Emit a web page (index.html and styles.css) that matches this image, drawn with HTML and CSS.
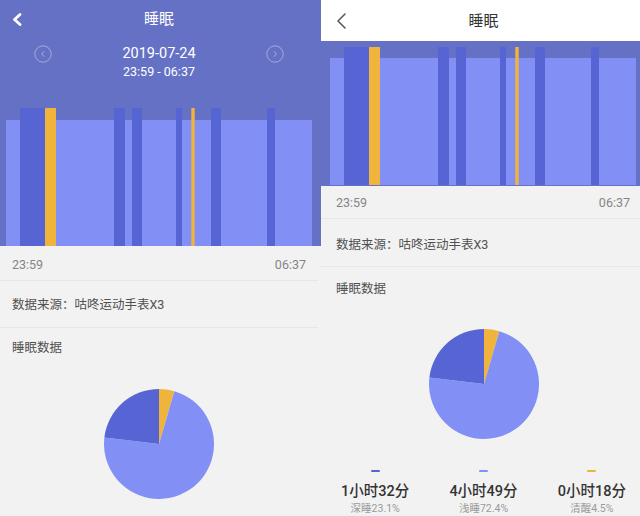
FILE: index.html
```html
<!DOCTYPE html>
<html lang="zh">
<head>
<meta charset="utf-8">
<title>睡眠</title>
<link rel="stylesheet" href="styles.css">
</head>
<body>
<div class="screens">
  <section class="panel panel-left">
    <div class="left-top">
      <div class="nav nav-dark">
        <svg class="back back-bold" width="10" height="13" viewBox="0 0 10 13"><path d="M8 1.5 L2.5 6.5 L8 11.5" fill="none" stroke="#fff" stroke-width="2.8" stroke-linecap="round" stroke-linejoin="round"/></svg>
        <span class="nav-title">睡眠</span>
      </div>
      <div class="date-row">
        <svg class="circle-btn" width="18" height="18" viewBox="0 0 18 18"><circle cx="9" cy="9" r="8.2" fill="none" stroke="#fff" stroke-opacity="0.4" stroke-width="1"/><path d="M10.2 6.3 L7.6 9 L10.2 11.7" fill="none" stroke="#fff" stroke-opacity="0.45" stroke-width="1"/></svg>
        <div class="date-block">
          <div class="date">2019-07-24</div>
          <div class="range">23:59 - 06:37</div>
        </div>
        <svg class="circle-btn" width="18" height="18" viewBox="0 0 18 18"><circle cx="9" cy="9" r="8.2" fill="none" stroke="#fff" stroke-opacity="0.4" stroke-width="1"/><path d="M7.8 6.3 L10.4 9 L7.8 11.7" fill="none" stroke="#fff" stroke-opacity="0.45" stroke-width="1"/></svg>
      </div>
      <svg class="chart chart-left" width="306" height="138" viewBox="0 0 306 138">
        <rect class="light" x="0" y="12" width="306" height="126"/>
        <rect class="deep" x="14" y="0" width="25" height="138"/>
        <rect class="awake" x="39" y="0" width="11" height="138"/>
        <rect class="deep" x="108" y="0" width="11" height="138"/>
        <rect class="deep" x="126" y="0" width="10" height="138"/>
        <rect class="deep" x="170" y="0" width="6" height="138"/>
        <rect class="awake" x="185.3" y="0" width="3.4" height="138"/>
        <rect class="deep" x="205" y="0" width="10" height="138"/>
        <rect class="deep" x="261" y="0" width="8" height="138"/>
      </svg>
    </div>
    <div class="left-bottom">
      <div class="time-row time-row-left"><span>23:59</span><span>06:37</span></div>
      <div class="source-row source-left">数据来源：咕咚运动手表X3</div>
      <div class="section-title title-left">睡眠数据</div>
      <div class="pie-wrap pie-left">
        <svg width="110" height="110" viewBox="-55 -55 110 110">
          <path class="awake" d="M0 0 L0 -55 A55 55 0 0 1 15.35 -52.82 Z"/>
          <path class="light" d="M0 0 L15.35 -52.82 A55 55 0 1 1 -54.61 -6.55 Z"/>
          <path class="deep" d="M0 0 L-54.61 -6.55 A55 55 0 0 1 0 -55 Z"/>
        </svg>
      </div>
    </div>
  </section>

  <section class="panel panel-right">
    <div class="nav nav-light">
      <svg class="back back-thin" width="11" height="16" viewBox="0 0 11 16"><path d="M9 1 L2 8 L9 15" fill="none" stroke="#555" stroke-width="1.5" stroke-linecap="round" stroke-linejoin="round"/></svg>
      <span class="nav-title">睡眠</span>
    </div>
    <div class="chart-area">
      <svg class="chart chart-right" width="306" height="138" viewBox="0 0 306 138">
        <rect class="light" x="0" y="11" width="306" height="127"/>
        <rect class="deep" x="14" y="0" width="25" height="138"/>
        <rect class="awake" x="39" y="0" width="11" height="138"/>
        <rect class="deep" x="108" y="0" width="11" height="138"/>
        <rect class="deep" x="126" y="0" width="10" height="138"/>
        <rect class="deep" x="170" y="0" width="6" height="138"/>
        <rect class="awake" x="185.3" y="0" width="3.4" height="138"/>
        <rect class="deep" x="205" y="0" width="10" height="138"/>
        <rect class="deep" x="261" y="0" width="8" height="138"/>
      </svg>
    </div>
    <div class="time-row time-row-right"><span>23:59</span><span>06:37</span></div>
    <div class="source-row source-right">数据来源：咕咚运动手表X3</div>
    <div class="section-title title-right">睡眠数据</div>
    <div class="pie-wrap pie-right">
      <svg width="110" height="110" viewBox="-55 -55 110 110">
        <path class="awake" d="M0 0 L0 -55 A55 55 0 0 1 15.35 -52.82 Z"/>
        <path class="light" d="M0 0 L15.35 -52.82 A55 55 0 1 1 -54.61 -6.55 Z"/>
        <path class="deep" d="M0 0 L-54.61 -6.55 A55 55 0 0 1 0 -55 Z"/>
      </svg>
    </div>
    <div class="legend">
      <div class="legend-item">
        <span class="dash dash-deep"></span>
        <span class="value">1小时32分</span>
        <span class="label">深睡23.1%</span>
      </div>
      <div class="legend-item">
        <span class="dash dash-light"></span>
        <span class="value">4小时49分</span>
        <span class="label">浅睡72.4%</span>
      </div>
      <div class="legend-item">
        <span class="dash dash-awake"></span>
        <span class="value">0小时18分</span>
        <span class="label">清醒4.5%</span>
      </div>
    </div>
  </section>
</div>
</body>
</html>
```

FILE: styles.css
```css
* { box-sizing: border-box; margin: 0; padding: 0; }

html, body {
  width: 640px;
  height: 516px;
  overflow: hidden;
}

body {
  font-family: "Roboto", "Noto Sans CJK SC", sans-serif;
  background: #f2f2f2;
  color: #444;
}

.screens {
  display: flex;
  width: 640px;
  height: 516px;
  overflow: hidden;
}

.panel {
  flex: none;
  height: 516px;
  background: #f2f2f2;
  display: flex;
  flex-direction: column;
}

.panel-left { width: 321px; }
.panel-right { width: 325px; }

/* chart colours */
.light { fill: #8290f5; }
.deep { fill: #5665d3; }
.awake { fill: #f0b43c; }

/* left top */
.left-top {
  background: #6571c5;
  height: 246px;
  padding-right: 3px;
  display: flex;
  flex-direction: column;
}

.nav {
  position: relative;
  display: flex;
  justify-content: center;
  align-items: center;
  flex: none;
}

.nav-dark { height: 38px; }
.nav-light { height: 41px; background: #fff; }

.nav-title {
  font-size: 15px;
  line-height: 20px;
}
.nav-dark .nav-title { color: #fff; }
.nav-light .nav-title { color: #333; }

.back {
  position: absolute;
  display: block;
}
.back-bold { left: 12px; top: 13px; }
.back-thin { left: 15px; top: 12.5px; }

.date-row {
  margin-top: 7px;
  padding: 0 34px 0 34px;
  display: flex;
  justify-content: space-between;
  align-items: flex-start;
  color: #fff;
}

.circle-btn {
  display: block;
}

.date-block {
  text-align: center;
}

.date {
  font-size: 14.5px;
  line-height: 18px;
}

.range {
  font-size: 12.5px;
  line-height: 18px;
}

.chart {
  display: block;
  flex: none;
}

.chart-left {
  margin: 27px 0 0 6px;
}

.left-bottom {
  padding-right: 3px;
}

/* right chart */
.chart-area {
  background: #6571c5;
  padding: 6px 0 1px 9px;
  flex: none;
}

/* rows */
.time-row {
  display: flex;
  justify-content: space-between;
  font-size: 12.5px;
  line-height: 18px;
  color: #858585;
  border-bottom: 1px solid #e7e7e7;
}

.time-row-left { height: 35px; padding: 10px 12px 0; }
.time-row-right { height: 33px; padding: 8px 16px 0 15px; }

.source-row {
  font-size: 12.5px;
  line-height: 18px;
  color: #505050;
  border-bottom: 1px solid #e7e7e7;
}

.source-left { height: 47px; padding: 15px 12px 0; }
.source-right { height: 48px; padding: 17px 15px 0; }

.section-title {
  font-size: 12.5px;
  line-height: 18px;
  color: #505050;
}

.title-left { height: 41px; padding: 11px 12px 0; }
.title-right { height: 40px; padding: 13px 15px 0; }

.pie-wrap {
  display: flex;
  justify-content: center;
}
.pie-wrap svg { display: block; }

.pie-left { padding-top: 20px; }
.pie-right { padding-top: 22px; }

/* legend */
.legend {
  display: grid;
  grid-template-columns: repeat(3, 1fr);
  margin-top: 31px;
}

.legend-item {
  display: flex;
  flex-direction: column;
  align-items: center;
}

.dash {
  display: block;
  width: 9px;
  height: 2px;
  border-radius: 1px;
}
.dash-deep { background: #5665d3; }
.dash-light { background: #8290f5; }
.dash-awake { background: #f0b43c; }

.value {
  margin-top: 10px;
  font-size: 14.5px;
  line-height: 20px;
  font-weight: 500;
  color: #333;
}

.label {
  font-size: 10.5px;
  line-height: 13px;
  color: #9a9a9a;
}
```
